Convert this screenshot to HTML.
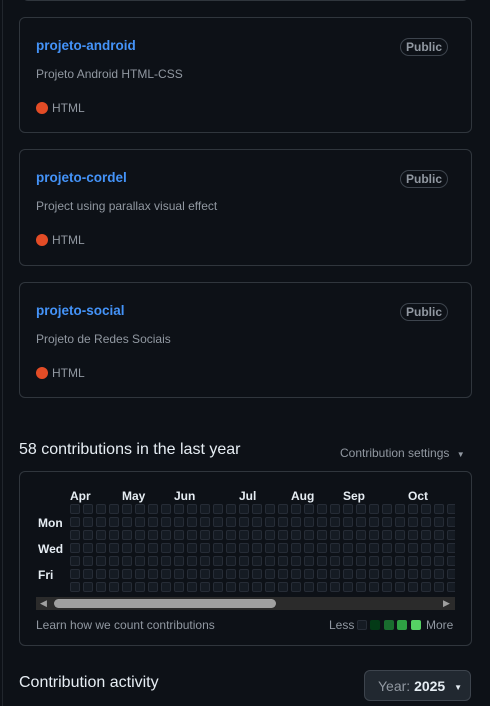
<!DOCTYPE html>
<html><head><meta charset="utf-8"><style>
body{margin:0;width:490px;height:706px;background:#0d1117;font-family:"Liberation Sans",sans-serif;position:relative;overflow:hidden;color:#e6edf3}
.a{position:absolute}
.card{position:absolute;left:19px;width:451px;border:1px solid #30363d;border-radius:6px;height:114px}
.card .t{position:absolute;left:16px;top:20px;color:#4493f8;font-weight:bold;font-size:13.5px}
.card .p{position:absolute;right:23px;top:20px;border:1px solid #3d444d;border-radius:10px;font-size:12px;color:#9198a1;padding:1px 5px;font-weight:bold}
.card .d{position:absolute;left:16px;top:49px;font-size:12px;color:#9198a1}
.card .l{position:absolute;left:16px;top:83px;font-size:12px;color:#9198a1}
.card .l i{display:inline-block;width:12px;height:12px;border-radius:50%;background:#e34c26;vertical-align:-2px;margin-right:4px}
.c{position:absolute;width:10px;height:10px;background:#151b23;border:1px solid #262c36;box-sizing:border-box;border-radius:2px}
.m{position:absolute;top:489px;font-size:12px;font-weight:bold;color:#e6edf3}
.dl{position:absolute;left:38px;font-size:12px;font-weight:bold;color:#e6edf3}
</style></head><body>
<div class="a" style="left:2px;top:0;width:1px;height:706px;background:#21262d"></div>
<div class="a" style="left:22px;top:-10px;width:445px;height:10px;border:1px solid #30363d;border-top:none;border-radius:0 0 6px 6px"></div>
<div class="card" style="top:17px"><div class="t">projeto-android</div><div class="p">Public</div><div class="d">Projeto Android HTML-CSS</div><div class="l"><i></i>HTML</div></div>
<div class="card" style="top:149px;height:115px"><div class="t" style="top:20px">projeto-cordel</div><div class="p">Public</div><div class="d">Project using parallax visual effect</div><div class="l"><i></i>HTML</div></div>
<div class="card" style="top:282px;height:114px"><div class="t">projeto-social</div><div class="p">Public</div><div class="d">Projeto de Redes Sociais</div><div class="l"><i></i>HTML</div></div>
<div class="a" style="left:19px;top:441px;font-size:16px">58 contributions in the last year</div>
<div class="a" style="left:340px;top:446px;font-size:12px;color:#9198a1">Contribution settings <span style="font-size:8px;margin-left:4px">▼</span></div>
<div class="a" style="left:19px;top:471px;width:451px;height:173px;border:1px solid #30363d;border-radius:6px"></div>
<div class="m" style="left:70px">Apr</div><div class="m" style="left:122px">May</div><div class="m" style="left:174px">Jun</div><div class="m" style="left:239px">Jul</div><div class="m" style="left:291px">Aug</div><div class="m" style="left:343px">Sep</div><div class="m" style="left:408px">Oct</div>
<div class="dl" style="top:516px">Mon</div><div class="dl" style="top:542px">Wed</div><div class="dl" style="top:568px">Fri</div>
<div class="a" style="left:70px;top:504px;width:385px;height:91px;overflow:hidden" id="g"></div>
<div class="a" style="left:36px;top:597px;width:419px;height:13px;background:#2b2b2b"></div>
<div class="a" style="left:54px;top:599px;width:222px;height:9px;background:#a0a0a0;border-radius:5px"></div>
<div class="a" style="left:40px;top:598px;font-size:9px;color:#a0a0a0">◀</div>
<div class="a" style="left:443px;top:598px;font-size:9px;color:#a0a0a0">▶</div>
<div class="a" style="left:36px;top:618px;font-size:12px;color:#9198a1">Learn how we count contributions</div>
<div class="a" style="left:329px;top:618px;font-size:12px;color:#9198a1">Less</div>
<div class="c" style="left:357px;top:620px"></div>
<div class="c" style="left:370px;top:620px;background:#033a16;border:none"></div>
<div class="c" style="left:384px;top:620px;background:#196c2e;border:none"></div>
<div class="c" style="left:397px;top:620px;background:#2ea043;border:none"></div>
<div class="c" style="left:411px;top:620px;background:#56d364;border:none"></div>
<div class="a" style="left:426px;top:618px;font-size:12px;color:#9198a1">More</div>
<div class="a" style="left:19px;top:674px;font-size:16px">Contribution activity</div>
<div class="a" style="left:364px;top:670px;width:107px;height:31px;background:#212830;border:1px solid #3d444d;border-radius:6px;box-sizing:border-box;font-size:14px;line-height:30px;padding-left:13px;color:#9198a1">Year: <b style="color:#e6edf3">2025</b> <span style="font-size:8px;color:#e6edf3;margin-left:5px;vertical-align:1px">▼</span></div>
<script>
var g=document.getElementById('g'),h='';
for(var x=0;x<30;x++)for(var y=0;y<7;y++)h+='<div class="c" style="left:'+(x*13)+'px;top:'+(y*13)+'px"></div>';
g.innerHTML=h;
</script>
</body></html>
